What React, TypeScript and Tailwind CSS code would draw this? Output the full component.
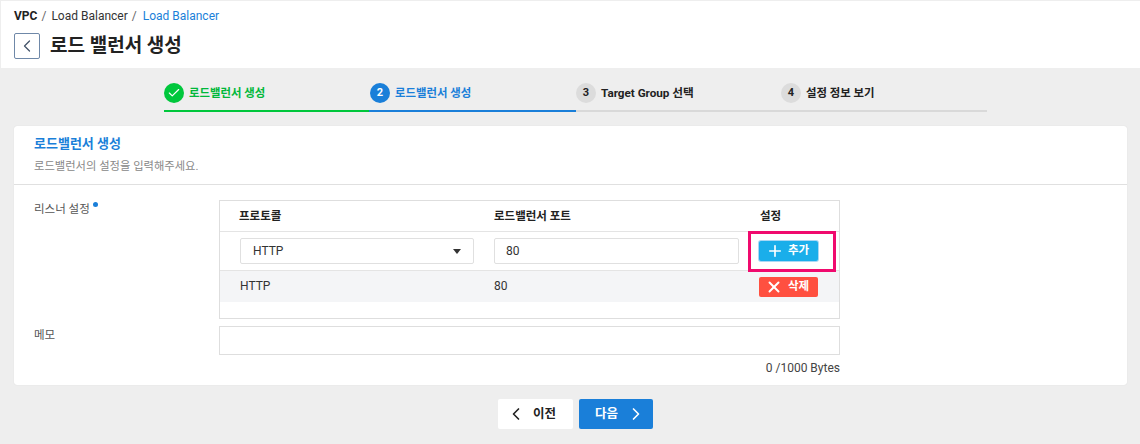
import { ChevronLeft, ChevronRight, Check, Plus, X } from "lucide-react";

const font = { fontFamily: "Roboto, 'Noto Sans CJK KR', sans-serif" };

function Step({ n, label, state, width }: { n: string; label: string; state: "done" | "active" | "todo"; width: string }) {
  return (
    <div className={`${width} h-[32px] flex items-start border-b-2 ${state === "done" ? "border-[#00c73c]" : state === "active" ? "border-[#1a7fd9]" : "border-[#d9d9d9]"}`}>
      <div className={`w-[20px] h-[20px] rounded-full flex items-center justify-center text-[11px] font-bold mt-[3px] ${state === "done" ? "bg-[#00c73c] text-white" : state === "active" ? "bg-[#1a7fd9] text-white ml-[1px]" : "bg-[#dcdcdc] text-[#222]"}`}>
        {state === "done" ? <Check className="w-[14px] h-[14px]" strokeWidth={2} /> : n}
      </div>
      <span className={`ml-[5px] mt-[5px] leading-[16px] font-bold ${n === "3" ? "text-[11.7px]" : "text-[11.4px]"} ${state === "done" ? "text-[#00b83a]" : state === "active" ? "text-[#1a7fd9]" : "text-[#222]"}`}>{label}</span>
    </div>
  );
}

export default function App() {
  return (
    <div style={font} className="w-[1140px] h-[444px] bg-[#eeeeee] overflow-hidden text-[#222] pl-[1px] pt-[1px]">
      {/* Header */}
      <div className="h-[67px] bg-white pl-[13px] pt-[7px]">
        <div className="flex items-center text-[12px] leading-[16px]">
          <span className="font-bold text-[#222]">VPC</span>
          <span className="ml-[4px] text-[#666]">/</span>
          <span className="ml-[5px] text-[#333]">Load Balancer</span>
          <span className="ml-[4px] text-[#666]">/</span>
          <span className="ml-[6px] text-[#1a7fd9]">Load Balancer</span>
        </div>
        <div className="flex items-center mt-[9px]">
          <button className="w-[26px] h-[26px] border border-[#6f88a8] rounded-[2px] flex items-center justify-center text-[#44546a]">
            <ChevronLeft className="w-[20px] h-[20px]" strokeWidth={1.5} />
          </button>
          <h1 className="ml-[10px] text-[19px] leading-[26px] font-bold text-[#222]">로드 밸런서 생성</h1>
        </div>
      </div>

      {/* Steps */}
      <div className="flex pl-[163px] mt-[12px]">
        <Step n="1" label="로드밸런서 생성" state="done" width="w-[205px]" />
        <Step n="2" label="로드밸런서 생성" state="active" width="w-[207px]" />
        <Step n="3" label="Target Group 선택" state="todo" width="w-[205px]" />
        <Step n="4" label="설정 정보 보기" state="todo" width="w-[206px]" />
      </div>

      {/* Card */}
      <div className="ml-[13px] mt-[14px] w-[1113px] h-[259px] bg-white rounded-[3px] shadow-[0_0_1px_rgba(0,0,0,0.15)]">
        <div className="h-[59px] border-b border-[#e0e0e0] pl-[20px] pt-[9px]">
          <div className="text-[13px] leading-[18px] font-bold text-[#1a7fd9]">로드밸런서 생성</div>
          <div className="mt-[6px] text-[11.3px] leading-[16px] text-[#888]">로드밸런서의 설정을 입력해주세요.</div>
        </div>
        <div className="flex pl-[20px] pt-[15px]">
          <div className="w-[185px] text-[11.5px] leading-[18px] text-[#555] flex items-start">
            리스너 설정
            <span className="w-[5px] h-[5px] rounded-full bg-[#1a7fd9] ml-[3px] mt-[2px]" />
          </div>
          <div className="w-[621px] h-[119px] border border-[#dedede]">
            <div className="h-[31px] border-b border-[#e4e4e4] flex items-center pt-[1px] text-[11.5px] font-bold text-[#222]">
              <span className="ml-[19px] w-[255px]">프로토콜</span>
              <span className="w-[266px]">로드밸런서 포트</span>
              <span>설정</span>
            </div>
            <div className="h-[39px] border-b border-[#e4e4e4] flex items-center">
              <div className="ml-[20px] w-[234px] h-[26px] border border-[#e0e0e0] rounded-[2px] flex items-center justify-between pl-[12px] pr-[12px] text-[12px] text-[#333]">
                HTTP
                <span className="w-0 h-0 border-l-[4px] border-r-[4px] border-t-[5px] border-l-transparent border-r-transparent border-t-[#333]" />
              </div>
              <div className="ml-[20px] w-[245px] h-[26px] border border-[#e0e0e0] rounded-[2px] flex items-center pl-[11px] text-[12px] text-[#333]">80</div>
              <div className="ml-[9px] w-[88px] h-[41px] shrink-0 border-[3px] border-[#f00a6e] flex items-center pl-[8px]">
                <button className="w-[59px] h-[20px] bg-[#1aaeea] rounded-[2px] ring-1 ring-[#a9d8f5] text-white text-[11.5px] font-bold flex items-center pl-[7px] gap-[4px]">
                  <Plus className="w-[18px] h-[18px]" strokeWidth={2.2} />
                  추가
                </button>
              </div>
            </div>
            <div className="h-[31px] bg-[#f4f5f7] flex items-center text-[12px] text-[#333]">
              <span className="ml-[20px] w-[254px] -mt-[2px]">HTTP</span>
              <span className="w-[265px] -mt-[2px]">80</span>
              <button className="w-[59px] h-[20px] bg-[#ff5040] rounded-[2px] text-white text-[11.5px] font-bold flex items-center pl-[6px] gap-[5px]">
                <X className="w-[18px] h-[18px]" strokeWidth={2.6} />
                <span className="pt-[1px]">삭제</span>
              </button>
            </div>
          </div>
        </div>
        <div className="flex pl-[20px] mt-[7px]">
          <div className="w-[185px] text-[11.5px] leading-[18px] text-[#555]">메모</div>
          <div className="w-[621px]">
            <div className="h-[29px] border border-[#dedede]" />
            <div className="mt-[5px] text-right text-[12px] leading-[16px] text-[#444]">0 /1000 Bytes</div>
          </div>
        </div>
      </div>

      {/* Buttons */}
      <div className="flex gap-[6px] mt-[14px] pl-[497px]">
        <button className="w-[75px] h-[30px] bg-white rounded-[2px] flex items-center pl-[8px] gap-[7px] text-[12.5px] font-bold text-[#222]">
          <ChevronLeft className="w-[20px] h-[20px]" strokeWidth={2} />
          <span className="pt-[1px]">이전</span>
        </button>
        <button className="w-[74px] h-[30px] bg-[#1a7fd9] rounded-[2px] flex items-center pl-[16px] gap-[8px] text-[12.5px] font-bold text-white">
          <span className="pt-[1px]">다음</span>
          <ChevronRight className="w-[20px] h-[20px]" strokeWidth={2} />
        </button>
      </div>
    </div>
  );
}
